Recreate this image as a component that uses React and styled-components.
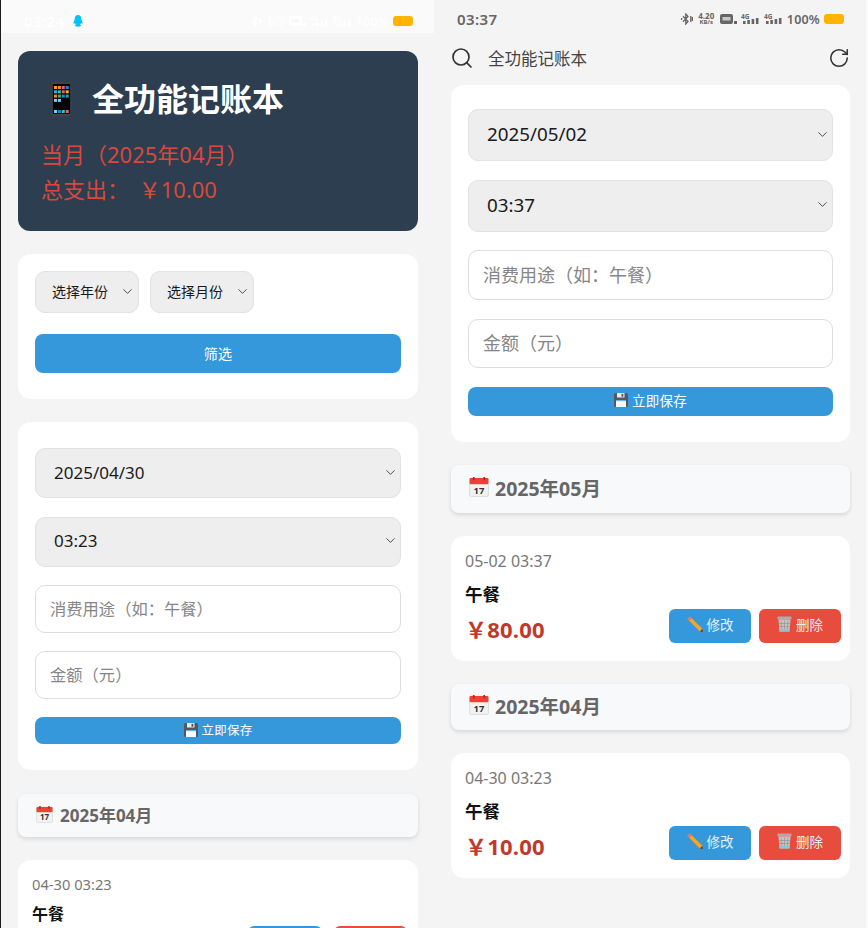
import styled, { createGlobalStyle } from "styled-components";
import { Search, RotateCw, ChevronDown } from "lucide-react";

const Global = createGlobalStyle`
  html, body {
    margin: 0;
    padding: 0;
    background: #f4f4f4;
  }
  * {
    box-sizing: border-box;
  }
`;

const FONT = `"Noto Sans", "Noto Sans CJK SC", sans-serif`;

const Page = styled.div`
  display: grid;
  grid-template-columns: 434px 434px;
  width: 868px;
  height: 928px;
  overflow: hidden;
  font-family: ${FONT};
`;
const Panel = styled.div`
  height: 928px;
  overflow: hidden;
  background: #f4f4f4;
  border-left: ${(p) => (p.$edge ? "1px solid #1c1c1c" : "0")};
  border-right: ${(p) => (p.$edge ? "0" : "2px solid #fbfbfb")};
`;
const Content = styled.div`
  display: flex;
  flex-direction: column;
  padding: ${(p) => p.$padding};
`;

const StatusBar = styled.div`
  display: flex;
  align-items: center;
  justify-content: space-between;
  height: ${(p) => p.$h}px;
  padding: ${(p) => p.$padding};
  background: ${(p) => p.$bg};
  color: ${(p) => p.$color};
`;
const StatusLeft = styled.div`
  display: flex;
  align-items: center;
  gap: 9px;
`;
const Time = styled.span`
  font-size: 15px;
  font-weight: 600;
  letter-spacing: 0.4px;
`;
const StatusRight = styled.div`
  display: flex;
  align-items: center;
  gap: 4px;
`;
const Speed = styled.div`
  display: flex;
  flex-direction: column;
  align-items: center;
  width: 19px;
  font-size: 8px;
  font-weight: 700;
  line-height: 7px;
  span + span {
    font-size: 6px;
  }
`;
const Percent = styled.span`
  font-size: 12.500px;
  font-weight: 600;
  letter-spacing: 0.2px;
`;
const Battery = styled.div`
  width: 20px;
  height: 10px;
  border-radius: 3px;
  background: #ffb500;
`;

const Toolbar = styled.div`
  display: flex;
  align-items: center;
  height: 47px;
  padding: 0 16px 7px 16px;
  color: #333;
`;
const ToolbarTitle = styled.span`
  flex: 1;
  margin-left: 14px;
  font-size: 16.500px;
  color: #444;
`;

const HeaderCard = styled.div`
  height: 180px;
  margin-bottom: 23px;
  padding: 24px;
  border-radius: 12px;
  background: #2c3e50;
`;
const Title = styled.h1`
  display: flex;
  align-items: center;
  gap: 20px;
  height: 48px;
  margin: 0 0 14px;
  padding-left: 9px;
  font-size: 32px;
  font-weight: 700;
  line-height: 48px;
  color: #fff;
`;
const HeaderLine = styled.div`
  margin-left: -1px;
  font-size: 22px;
  line-height: 35px;
  word-spacing: 4px;
  color: #d9493b;
`;

const Card = styled.div`
  display: flex;
  flex-direction: column;
  gap: ${(p) => p.$gap ?? 19}px;
  margin-bottom: ${(p) => p.$mb ?? 23}px;
  padding: ${(p) => p.$padding};
  border-radius: 13px;
  background: #fff;
`;
const SelectRow = styled.div`
  display: flex;
  gap: 11px;
`;
const SelectBox = styled.div`
  display: flex;
  align-items: center;
  justify-content: space-between;
  width: ${(p) => p.$w ?? "100%"};
  height: ${(p) => p.$h}px;
  padding: ${(p) => p.$padding};
  padding-bottom: 2px;
  border: 1px solid #e2e2e2;
  border-radius: 10px;
  background: #eee;
  font-size: ${(p) => p.$size}px;
  color: #1a1a1a;
  svg {
    flex: none;
    color: #444;
  }
`;
const TextInput = styled.input`
  display: block;
  width: 100%;
  height: ${(p) => p.$h}px;
  padding: 0 14px;
  border: 1px solid #ddd;
  border-radius: 10px;
  background: #fff;
  font-family: inherit;
  font-size: ${(p) => p.$size}px;
  outline: none;
  &::placeholder {
    color: #868686;
  }
`;
const PrimaryButton = styled.button`
  display: flex;
  align-items: center;
  justify-content: center;
  gap: 4px;
  width: 100%;
  height: ${(p) => p.$h}px;
  padding: 0 0 2px;
  border: 0;
  border-radius: 8px;
  background: #3498db;
  font-family: inherit;
  font-size: ${(p) => p.$size}px;
  color: #fff;
  letter-spacing: 0.2px;
`;

const MonthHeader = styled.div`
  display: flex;
  align-items: center;
  gap: ${(p) => p.$gap}px;
  height: ${(p) => p.$h}px;
  margin-bottom: 23px;
  padding: 0 0 3px 18px;
  border-radius: 8px;
  background: #f8f9fa;
  box-shadow: 0 2px 4px rgba(0, 0, 0, 0.12);
  font-size: ${(p) => p.$size}px;
  font-weight: 700;
  color: #666;
`;

const Record = styled.div`
  display: flex;
  justify-content: space-between;
  align-items: flex-start;
  height: ${(p) => p.$h}px;
  margin-bottom: 23px;
  padding: ${(p) => p.$padding};
  border-radius: 13px;
  background: #fff;
`;
const RecordInfo = styled.div`
  display: flex;
  flex-direction: column;
`;
const RecordDate = styled.div`
  font-size: ${(p) => p.$size}px;
  line-height: 20px;
  color: #777;
`;
const RecordName = styled.div`
  margin-top: ${(p) => p.$top}px;
  font-size: ${(p) => p.$size}px;
  font-weight: 700;
  line-height: 20px;
  color: #111;
`;
const RecordPrice = styled.div`
  margin-top: 11px;
  font-size: 22px;
  font-weight: 700;
  line-height: 28px;
  letter-spacing: 0.2px;
  color: #c0392b;
`;
const Actions = styled.div`
  display: flex;
  align-self: flex-end;
  gap: ${(p) => p.$gap}px;
`;
const ActionButton = styled.button`
  display: flex;
  align-items: center;
  justify-content: center;
  gap: 4px;
  width: ${(p) => p.$w}px;
  height: 34px;
  padding: 0 0 3px;
  border: 0;
  border-radius: 6px;
  background: ${(p) => p.$bg};
  font-family: inherit;
  font-size: 13.500px;
  color: #e6f1f9;
`;

const QQIcon = () => (
  <svg width="10" height="12" viewBox="0 0 10 12">
    <path
      d="M5 0C2.6 0 1.7 2 1.7 4.2L.5 7.6c-.3 1 .2 1.6.9 1L2 8c.2.8.5 1.400 1 1.800-.8.300-1.100.700-.9 1.300.3.700 4.700.700 5.800 0 .3-.6 0-1-.9-1.300.5-.4.800-1 1-1.800l.6.600c.700.600 1.200 0 .9-1L8.300 4.200C8.300 2 7.400 0 5 0z"
      fill="#00c3ff"
    />
  </svg>
);

const BluetoothIcon = () => (
  <svg width="12" height="12" viewBox="0 0 12 12" fill="none" stroke="currentColor" strokeWidth="1.300">
    <path d="M2 3.200l5 5.300-2.200 2.500V1l2.200 2.500-5 5.300" />
    <path d="M9.800 3v6M11.400 4v4M.6 5v2" />
  </svg>
);

const HdIcon = () => (
  <svg width="17" height="12" viewBox="0 0 17 12">
    <rect x="0" y="1" width="13" height="10" rx="2" fill="currentColor" />
    <rect x="2.500" y="4" width="8" height="3.500" fill="#f4f4f4" opacity="0.7" />
    <rect x="14" y="8" width="3" height="3" fill="currentColor" />
  </svg>
);

const SignalIcon = () => (
  <svg width="19" height="12" viewBox="0 0 19 12">
    <text x="0" y="5.500" fontSize="6.500" fontWeight="700" fill="currentColor" fontFamily="Noto Sans, sans-serif">
      4G
    </text>
    {[3, 4, 5, 6].map((h, i) => (
      <rect key={i} x={2 + i * 4.300} y={11 - h} width="2.600" height={h} fill="currentColor" />
    ))}
  </svg>
);

const PhoneEmoji = () => (
  <svg width="21" height="36" viewBox="0 0 21 36">
    <rect x="0.500" y="0.500" width="20" height="35" rx="3" fill="#3e434a" />
    <rect x="1.800" y="3" width="17.400" height="30" fill="#050505" />
    {[
      ["#f59b23", "#ef8f1f", "#e8589a", "#1c88d9"],
      ["#2fb3e6", "#35c3a0", "#f05a5a", "#f0b429"],
      ["#f08a24", "#3ab36f", "#1c88d9", "#1aa7a7"],
      ["#7ccdf5", "#7ccdf5", "#050505", "#050505"],
    ].map((row, y) =>
      row.map((c, x) => <rect key={`${x}-${y}`} x={3 + x * 3.900} y={5 + y * 4.300} width="3" height="3" fill={c} />)
    )}
    {["#7ccdf5", "#1c88d9", "#35c3a0", "#e8589a"].map((c, x) => (
      <rect key={x} x={3 + x * 3.900} y="29" width="3" height="3" fill={c} />
    ))}
  </svg>
);

const SaveEmoji = () => (
  <svg width="14" height="14" viewBox="0 0 14 14">
    <rect width="14" height="14" rx="1.500" fill="#55595f" />
    <rect x="3" y="0" width="7.500" height="4.500" fill="#e6ebf0" />
    <rect x="7.500" y="0.800" width="1.800" height="3" fill="#55595f" />
    <rect x="2" y="7" width="10" height="7" fill="#f7fafc" />
    <rect x="2" y="7" width="10" height="1.200" fill="#79b4e6" />
  </svg>
);

const CalendarEmoji = ({ size }) => (
  <svg width={size} height={size} viewBox="0 0 18 18">
    <rect x="0.500" y="1" width="17" height="16.500" rx="1.500" fill="#f2f2f2" stroke="#c9c9c9" strokeWidth="0.500" />
    <rect x="0.500" y="1" width="17" height="5.500" rx="1" fill="#ea4335" />
    <rect x="3.500" y="0" width="1.500" height="3" fill="#b3261e" />
    <rect x="13" y="0" width="1.500" height="3" fill="#b3261e" />
    <text x="9" y="15" textAnchor="middle" fontSize="8.500" fontWeight="700" fill="#333" fontFamily="Noto Sans, sans-serif">
      17
    </text>
  </svg>
);

const PencilEmoji = () => (
  <svg width="16" height="16" viewBox="0 0 16 16">
    <path d="M3 .4L15.400 12.800l.6 3.200-3.200-.6L.4 3z" fill="#f5a623" />
    <path d="M.4 3L3 .4l1.800 1.800-2.600 2.600z" fill="#e8707a" />
    <path d="M12.800 15.400l2.600-2.600.6 3.200z" fill="#444" />
  </svg>
);

const TrashEmoji = () => (
  <svg width="15" height="16" viewBox="0 0 15 16">
    <rect x="0.500" y="0.500" width="14" height="3" rx="0.800" fill="#b4a9aa" />
    <path d="M1.500 3.500h12L12.500 15.500h-10z" fill="#c9c2c3" />
    <path d="M4 4.500l.8 10M7.500 4.500v10M11 4.500l-.8 10M2 7.500h11M2.300 10.500h10.400" stroke="#938a8b" strokeWidth="0.600" />
    <path d="M2.400 13h10.200l-.2 2.500H2.600z" fill="#8dc3d6" />
  </svg>
);

const Status = ({ h, padding, bg, color, time, speed, qq }) => (
  <StatusBar $h={h} $padding={padding} $bg={bg} $color={color}>
    <StatusLeft>
      <Time>{time}</Time>
      {qq && <QQIcon />}
    </StatusLeft>
    <StatusRight>
      <BluetoothIcon />
      <Speed>
        <span>{speed}</span>
        <span>KB/s</span>
      </Speed>
      <HdIcon />
      <SignalIcon />
      <SignalIcon />
      <Percent>100%</Percent>
      <Battery />
    </StatusRight>
  </StatusBar>
);

const Select = ({ children, w, h, size, padding }) => (
  <SelectBox $w={w} $h={h} $size={size} $padding={padding}>
    {children}
    <ChevronDown size={15} strokeWidth={1.500} />
  </SelectBox>
);

const EntryForm = ({ date, time, sh, ih, bh, padding, gap, size, inputSize, btnSize, mb }) => (
  <Card $padding={padding} $gap={gap} $mb={mb}>
    <Select h={sh} size={size} padding="0 2px 0 18px">
      {date}
    </Select>
    <Select h={sh} size={size} padding="0 2px 0 18px">
      {time}
    </Select>
    <TextInput $h={ih} $size={inputSize} placeholder="消费用途（如：午餐）" />
    <TextInput $h={ih} $size={inputSize} placeholder="金额（元）" />
    <PrimaryButton $h={bh} $size={btnSize}>
      <SaveEmoji />
      立即保存
    </PrimaryButton>
  </Card>
);

const RecordRow = ({ date, price, large }) => (
  <Record $h={large ? 125 : 118} $padding={large ? "15px 9px 18px 14px" : "14px 11px 18px 14px"}>
    <RecordInfo>
      <RecordDate $size={large ? 16 : 14.700}>{date}</RecordDate>
      <RecordName $size={large ? 17.500 : 16} $top={large ? 13 : 10}>
        午餐
      </RecordName>
      <RecordPrice>￥{price}</RecordPrice>
    </RecordInfo>
    <Actions $gap={large ? 8 : 12}>
      <ActionButton $bg="#3498db" $w={large ? 82 : 74}>
        <PencilEmoji />
        修改
      </ActionButton>
      <ActionButton $bg="#e74c3c" $w={large ? 82 : 73}>
        <TrashEmoji />
        删除
      </ActionButton>
    </Actions>
  </Record>
);

const Month = ({ label, h, large }) => (
  <MonthHeader $h={h} $size={large ? 19.500 : 17} $gap={large ? 6 : 7}>
    <CalendarEmoji size={large ? 20 : 17} />
    {label}
  </MonthHeader>
);

const App = () => (
  <>
    <Global />
    <Page>
      <Panel $edge>
        <Status h={33} padding="9px 21px 0 23px" bg="#fafafa" color="#ffffff" time="03:24" speed="0.10" qq />
        <Content $padding="18px 16px 0 17px">
          <HeaderCard>
            <Title>
              <PhoneEmoji />
              全功能记账本
            </Title>
            <HeaderLine>当月（2025年04月）</HeaderLine>
            <HeaderLine>总支出： ￥10.00</HeaderLine>
          </HeaderCard>
          <Card $padding="17px 17px 26px" $gap={21}>
            <SelectRow>
              <Select w="104px" h={42} size={14} padding="0 3px 0 16px">
                选择年份
              </Select>
              <Select w="104px" h={42} size={14} padding="0 3px 0 16px">
                选择月份
              </Select>
            </SelectRow>
            <PrimaryButton $h={39} $size={14}>
              筛选
            </PrimaryButton>
          </Card>
          <EntryForm
            date="2025/04/30"
            time="03:23"
            sh={50}
            ih={47.500}
            bh={27}
            gap={18.500}
            padding="26px 17px"
            size={17}
            inputSize={16.300}
            btnSize={12.500}
            mb={24}
          />
          <Month label="2025年04月" h={43} />
          <RecordRow date="04-30 03:23" price="10.00" />
        </Content>
      </Panel>
      <Panel>
        <Status h={38} padding="0 22px 0 23px" bg="#f4f4f4" color="#666666" time="03:37" speed="4.20" />
        <Toolbar>
          <Search size={24} strokeWidth={1.700} />
          <ToolbarTitle>全功能记账本</ToolbarTitle>
          <RotateCw size={22} strokeWidth={1.700} />
        </Toolbar>
        <Content $padding="0 16px 0 17px">
          <EntryForm
            date="2025/05/02"
            time="03:37"
            sh={52}
            ih={49.500}
            bh={29}
            gap={18.700}
            padding="24px 17px 26px"
            size={18.800}
            inputSize={18}
            btnSize={13.500}
          />
          <Month label="2025年05月" h={48} large />
          <RecordRow date="05-02 03:37" price="80.00" large />
          <Month label="2025年04月" h={46} large />
          <RecordRow date="04-30 03:23" price="10.00" large />
        </Content>
      </Panel>
    </Page>
  </>
);

export default App;
